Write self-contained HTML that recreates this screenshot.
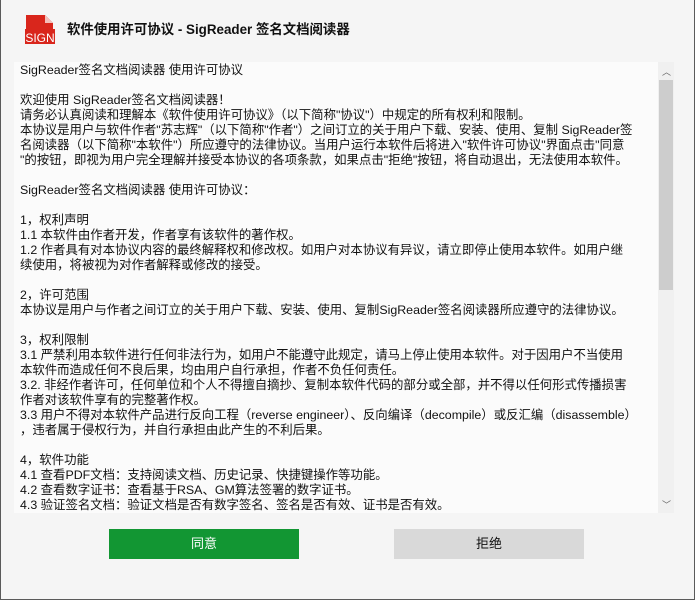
<!DOCTYPE html>
<html><head><meta charset="utf-8"><style>
*{margin:0;padding:0;box-sizing:border-box}
body{width:695px;height:600px;background:#f5f5f5;position:relative;overflow:hidden;font-family:"Liberation Sans","Noto Sans CJK SC",sans-serif;border:1px solid #5a5a5a;border-top:none}
.title{position:absolute;left:66px;top:18px;font-size:13.4px;font-weight:bold;color:#111;white-space:nowrap}
.box{position:absolute;left:13px;top:62px;width:660px;height:451px;background:#fbfbfb;overflow:hidden}
.txt{position:absolute;left:6px;top:1px;font-size:12.4px;line-height:15px;color:#111;white-space:pre}
.sb{position:absolute;left:644px;top:0;width:16px;height:451px;background:#f0f0f0}
.thumb{position:absolute;left:1px;top:18px;width:14px;height:210px;background:#cdcdcd}
.arr{position:absolute;left:4px;font-size:9px;color:#666}
.btn{position:absolute;top:529px;width:190px;height:30px;font-size:13px;text-align:center;line-height:30px}
</style></head><body>
<svg style="position:absolute;left:24px;top:14px" width="30" height="30" viewBox="0 0 30 30">
<path d="M1 1H20L28 9V15H1Z" fill="#d9261c"/><path d="M20 1V9H28" fill="#f3c0bb"/>
<rect x="0" y="15" width="30" height="15" fill="#d9261c"/>
<text x="15" y="28" font-family="Liberation Sans" font-size="12" fill="#fff" text-anchor="middle">SIGN</text></svg>
<div class="title">软件使用许可协议 - SigReader 签名文档阅读器</div>
<div class="box"><div class="txt">SigReader签名文档阅读器 使用许可协议

欢迎使用 SigReader签名文档阅读器！
请务必认真阅读和理解本《软件使用许可协议》（以下简称"协议"）中规定的所有权利和限制。
本协议是用户与软件作者"苏志辉"（以下简称"作者"）之间订立的关于用户下载、安装、使用、复制 SigReader签
名阅读器（以下简称"本软件"）所应遵守的法律协议。当用户运行本软件后将进入"软件许可协议"界面点击"同意
"的按钮，即视为用户完全理解并接受本协议的各项条款，如果点击"拒绝"按钮，将自动退出，无法使用本软件。

SigReader签名文档阅读器 使用许可协议：

1，权利声明
1.1 本软件由作者开发，作者享有该软件的著作权。
1.2 作者具有对本协议内容的最终解释权和修改权。如用户对本协议有异议，请立即停止使用本软件。如用户继
续使用，将被视为对作者解释或修改的接受。

2，许可范围
本协议是用户与作者之间订立的关于用户下载、安装、使用、复制SigReader签名阅读器所应遵守的法律协议。

3，权利限制
3.1 严禁利用本软件进行任何非法行为，如用户不能遵守此规定，请马上停止使用本软件。对于因用户不当使用
本软件而造成任何不良后果，均由用户自行承担，作者不负任何责任。
3.2. 非经作者许可，任何单位和个人不得擅自摘抄、复制本软件代码的部分或全部，并不得以任何形式传播损害
作者对该软件享有的完整著作权。
3.3 用户不得对本软件产品进行反向工程（reverse engineer）、反向编译（decompile）或反汇编（disassemble）
，违者属于侵权行为，并自行承担由此产生的不利后果。

4，软件功能
4.1 查看PDF文档：支持阅读文档、历史记录、快捷键操作等功能。
4.2 查看数字证书：查看基于RSA、GM算法签署的数字证书。
4.3 验证签名文档：验证文档是否有数字签名、签名是否有效、证书是否有效。</div>
<div class="sb"><div class="arr" style="top:3px">︿</div><div class="thumb"></div><div class="arr" style="top:436px">﹀</div></div></div>
<div class="btn" style="left:108px;background:#129633;color:#fff">同意</div>
<div class="btn" style="left:393px;background:#d9d9d9;color:#111">拒绝</div>
</body></html>
